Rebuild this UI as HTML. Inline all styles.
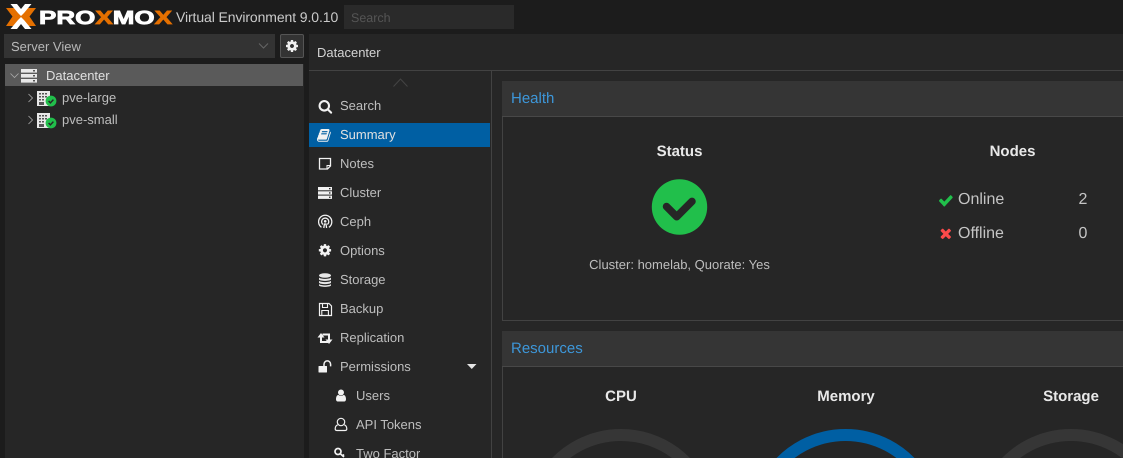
<!DOCTYPE html>
<html><head><meta charset="utf-8"><style>
html,body{margin:0;padding:0;width:1123px;height:458px;overflow:hidden;background:#1c1c1c;font-family:"Liberation Sans",sans-serif}
#w{position:relative;width:1123px;height:458px;overflow:hidden;text-rendering:geometricPrecision}
.a{position:absolute;white-space:nowrap}
.t{position:absolute;white-space:nowrap;font-size:13px;line-height:16px;color:#bebebe}
.b{font-weight:bold;font-size:15px;color:#e8e8e8;transform:translateX(-50%)}
svg{position:absolute;left:0;top:0;overflow:hidden}
</style></head><body><div id="w">
<div class="a" style="left:309px;top:34px;width:814px;height:424px;background:#262626"></div>
<div class="a" style="left:4px;top:34px;width:271px;height:24px;background:#333"></div>
<div class="a" style="left:280px;top:34px;width:22px;height:22px;background:#333;border:1px solid #555;border-radius:2px"></div>
<div class="a" style="left:5px;top:64px;width:299px;height:394px;background:#262626"></div>
<div class="a" style="left:5px;top:64px;width:298px;height:22px;background:#5a5a5a"></div>
<div class="a" style="left:344px;top:5px;width:170px;height:24px;background:#2a2a2a"></div>
<div class="a" style="left:309px;top:70px;width:814px;height:1px;background:#424242"></div>
<div class="a" style="left:491px;top:71px;width:1px;height:387px;background:#424242"></div>
<div class="a" style="left:309px;top:123px;width:181px;height:24px;background:#005fa3"></div>
<div class="a" style="left:502px;top:81px;width:621px;height:35px;background:#353535;border-bottom:1px solid #484848"></div>
<div class="a" style="left:502px;top:117px;width:620px;height:203px;border-left:1px solid #424242;border-bottom:1px solid #424242"></div>
<div class="a" style="left:502px;top:331px;width:621px;height:35px;background:#353535;border-bottom:1px solid #484848"></div>
<div class="a" style="left:502px;top:367px;width:620px;height:91px;border-left:1px solid #424242"></div>

<svg width="1123" height="458" viewBox="0 0 1123 458">
<defs>
<path id="cog" d="M1152 896q0-106-75-181t-181-75-181 75-75 181 75 181 181 75 181-75 75-181zm512-109v222q0 12-8 23t-20 13l-185 28q-19 54-39 91 35 50 107 138 10 12 10 25t-9 23q-27 37-99 108t-94 71q-12 0-26-9l-138-108q-44 23-91 38-16 136-29 186-7 28-36 28h-222q-14 0-24.500-8.500t-11.500-21.500l-28-184q-49-16-90-37l-141 107q-10 9-25 9-14 0-25-11-126-114-165-168-7-10-7-23 0-12 8-23 15-21 51-66.500t54-70.500q-27-50-41-99l-183-27q-13-2-21-12.500t-8-23.500v-222q0-12 8-23t19-13l186-28q14-46 39-92-40-57-107-138-10-12-10-24 0-10 9-23 26-36 98.500-107.500t94.500-71.500q13 0 26 10l138 107q44-23 91-38 16-136 29-186 7-28 36-28h222q14 0 24.500 8.500t11.500 21.500l28 184q49 16 90 37l142-107q9-9 24-9 13 0 25 10 129 119 165 170 7 8 7 22 0 12-8 23-15 21-51 66.500t-54 70.500q26 50 41 98l183 28q13 2 21 12.500t8 23.500z"/>
<path id="chk" d="M1671 566q0 40-28 68l-724 724-136 136q-28 28-68 28t-68-28l-136-136-362-362q-28-28-28-68t28-68l136-136q28-28 68-28t68 28l294 295 656-657q28-28 68-28t68 28l136 136q28 28 28 68z"/>
<g id="node"><rect x="0" y="0" width="13" height="15" fill="#e8e8e8"/><g fill="#555"><rect x="2" y="2" width="2" height="1.500"/><rect x="5" y="2" width="2" height="1.500"/><rect x="8" y="2" width="2" height="1.500"/><rect x="2" y="5" width="2" height="1.500"/><rect x="5" y="5" width="2" height="1.500"/><rect x="8" y="5" width="2" height="1.500"/><rect x="2" y="8" width="2" height="1.500"/><rect x="5" y="8" width="2" height="1.500"/><rect x="2" y="11" width="5" height="3"/></g><circle cx="14" cy="10" r="5.400" fill="#21bf4b"/><path d="M11.600 10l1.800 1.900 3-3.300" fill="none" stroke="#262626" stroke-width="1.400"/></g>
</defs>

<!-- logo -->
<polygon points="6,8 15.500,8 22,16.500 15.500,26 6,26 12.500,16.500" fill="#e57000"/>
<polygon points="36,8 26.500,8 20,16.500 26.500,26 36,26 29.500,16.500" fill="#e57000"/>
<polygon points="10.500,4 17,4 21,9 25,4 31.500,4 24,13 21,16 18,13" fill="#fff"/>
<polygon points="10.500,29 17,29 21,24 25,29 31.500,29 24,20 21,17 18,20" fill="#fff"/>
<text x="39" y="24" font-family="Liberation Sans" font-weight="bold" font-size="19" textLength="133" lengthAdjust="spacingAndGlyphs" stroke-width=".8" stroke="#fff" fill="#fff">PRO<tspan fill="#e57000" stroke="#e57000">X</tspan>MO<tspan fill="#e57000" stroke="#e57000">X</tspan></text>

<!-- combo + gear -->
<path d="M259 43.500l4.500 4.500 4.500-4.500" fill="none" stroke="#666" stroke-width="1"/>
<use href="#cog" transform="translate(285,39) scale(.0078)" fill="#f0f0f0"/>

<!-- tree -->
<path d="M10.500 73.500l4 4 4-4" fill="none" stroke="#aaa" stroke-width=".8"/>
<g fill="#e8e8e8"><rect x="21" y="69" width="16" height="3.600"/><rect x="21" y="74" width="16" height="3.600"/><rect x="21" y="79" width="16" height="3.600"/></g>
<g fill="#555"><rect x="33" y="70" width="2" height="1.500"/><rect x="33" y="75" width="2" height="1.500"/><rect x="33" y="80" width="2" height="1.500"/></g>
<path d="M28.500 94l4 4-4 4M28.500 116l4 4-4 4" fill="none" stroke="#aaa" stroke-width=".8"/>
<use href="#node" x="37" y="91"/>
<use href="#node" x="37" y="113"/>

<!-- scroll up -->
<path d="M393.500 86.500l7-7.500 7 7.500" fill="none" stroke="#444" stroke-width="1"/>

<!-- menu icons -->
<path transform="translate(318,99) scale(.0082)" fill="#f2f2f2" d="M1216 832q0-185-131.500-316.500t-316.500-131.500-316.500 131.500-131.500 316.500 131.500 316.500 316.500 131.500 316.500-131.500 131.500-316.500zm512 832q0 52-38 90t-90 38q-54 0-90-38l-343-342q-179 124-399 124-143 0-273.500-55.500t-225-150-150-225-55.500-273.500 55.500-273.500 150-225 225-150 273.500-55.500 273.500 55.500 225 150 150 225 55.500 273.500q0 220-124 399l343 343q37 37 37 90z"/>
<path transform="translate(317,128) scale(.0083)" fill="#f2f2f2" d="M1639 478q40 57 18 129l-275 906q-19 64-76.500 107.500t-122.500 43.500h-923q-77 0-148.500-53.500t-99.500-131.500q-24-67-2-127 0-4 3-27t4-37q1-8-3-21.500t-3-19.500q2-11 8-21t16.500-23.500 16.500-23.500q23-38 45-91.500t30-91.500q3-10 .5-30t-.5-28q3-11 17-28t17-23q21-36 42-92t25-90q1-9-2.500-32t.5-28q4-13 22-30.500t22-22.500q19-26 42.500-84.500t27.500-96.500q1-8-3-25.500t-2-26.500q2-8 9-18t18-23 17-21q8-12 16.500-30.500t15-35 16-36 19.500-32 26.500-23.500 36-11.500 47.500 5.500l-1 3q38-9 51-9h761q74 0 114 56t18 130l-274 906q-36 119-71.500 153.500t-128.500 34.500h-869q-27 0-38 15-11 16-1 43 24 70 144 70h923q29 0 56-15.500t35-41.500l300-987q7-22 5-57 38 15 59 43zm-1064 2q-4 13 2 22.500t20 9.500h608q13 0 25.500-9.500t16.500-22.500l21-64q4-13-2-22.500t-20-9.500h-608q-13 0-25.500 9.500t-16.500 22.500zm-83 256q-4 13 2 22.500t20 9.500h608q13 0 25.500-9.500t16.500-22.500l21-64q4-13-2-22.500t-20-9.500h-608q-13 0-25.500 9.500t-16.500 22.500z"/>
<path d="M319.500 158.500h11v7.500l-3 3h-8z" fill="none" stroke="#f2f2f2" stroke-width="1.300"/>
<path d="M330.500 165.500h-3.500v3.500" fill="none" stroke="#f2f2f2" stroke-width="1"/>
<g fill="#f2f2f2"><rect x="318" y="187" width="14" height="3.300"/><rect x="318" y="191.300" width="14" height="3.300"/><rect x="318" y="195.600" width="14" height="3.300"/></g>
<g fill="#262626"><rect x="329" y="188" width="1.500" height="1.300"/><rect x="329" y="192.300" width="1.500" height="1.300"/><rect x="329" y="196.600" width="1.500" height="1.300"/></g>
<g fill="none" stroke="#f2f2f2" stroke-width="1.300"><path d="M321.500 227.300a6.600 6.600 0 1 1 7.400 0"/><path d="M323 224.500a3.600 3.600 0 1 1 4.400 0"/><path d="M323.800 228l.6-4h1.600l.6 4"/></g>
<circle cx="325.200" cy="221.300" r="1.300" fill="#f2f2f2"/>
<use href="#cog" transform="translate(317.800,243.100) scale(.008)" fill="#f2f2f2"/>
<g fill="#e8e8e8"><ellipse cx="325" cy="275.500" rx="6" ry="2.300"/><path d="M319 277.500c1.500 1.800 10.500 1.800 12 0v2c-1.500 1.800-10.500 1.800-12 0z"/><path d="M319 280.800c1.500 1.800 10.500 1.800 12 0v2c-1.500 1.800-10.500 1.800-12 0z"/><path d="M319 284c1.500 1.800 10.500 1.800 12 0v1.500c-1.500 1.800-10.500 1.800-12 0z"/></g>
<path d="M319.500 303.500h9.500l2.500 2.500v9.500h-12z" fill="none" stroke="#f2f2f2" stroke-width="1.200"/>
<path d="M322.500 304v3.500h5v-3.500M321.800 315v-4.500h6.600v4.500" fill="none" stroke="#f2f2f2" stroke-width="1.100"/>
<path d="M321 336v6h7M322.500 334.500h6.500v6" fill="none" stroke="#f2f2f2" stroke-width="2"/>
<polygon points="317.500,337.500 321,333 324.500,337.500" fill="#f2f2f2"/>
<polygon points="325.500,339.500 332.500,339.500 329,344" fill="#f2f2f2"/>
<rect x="318.500" y="366" width="8.500" height="6.500" fill="#f2f2f2" rx=".5"/>
<path d="M324 366.500v-2.300a3.300 3.300 0 0 1 6.600 0v2.200" fill="none" stroke="#f2f2f2" stroke-width="1.500"/>
<path transform="translate(334,388.500) scale(.0078)" fill="#f2f2f2" d="M1536 1399q0 109-62.500 187t-150.500 78h-854q-88 0-150.500-78t-62.500-187q0-85 8.500-160.500t31.500-152 58.500-131 94-89 134.500-34.500q131 128 313 128t313-128q76 0 134.500 34.500t94 89 58.500 131 31.500 152 8.500 160.500zm-256-887q0 159-112.500 271.500t-271.500 112.500-271.500-112.500-112.500-271.500 112.500-271.500 271.500-112.500 271.500 112.500 112.500 271.500z"/>
<circle cx="341" cy="422" r="3.700" fill="none" stroke="#f2f2f2" stroke-width="1.200"/>
<path d="M337.700 424.800c-2 .8-2.500 2.300-2.500 4 0 1 .7 1.700 1.600 1.700h8.400c1 0 1.600-.7 1.600-1.700 0-1.700-.5-3.200-2.500-4" fill="none" stroke="#f2f2f2" stroke-width="1.200"/>
<circle cx="338" cy="451.500" r="3" fill="none" stroke="#f2f2f2" stroke-width="1.700"/>
<path d="M340 453.500l4 3.500M343 455.500l1-1" fill="none" stroke="#f2f2f2" stroke-width="1.700"/>
<path d="M467 364h9.500l-4.750 5z" fill="#e4e4e4"/>

<!-- status -->
<circle cx="679.500" cy="207" r="27.700" fill="#21bf4b"/>
<path d="M666.500 206.500l10.200 10.200 15.300-15.300" fill="none" stroke="#262626" stroke-width="7.500" stroke-linejoin="round" stroke-linecap="round"/>
<use href="#chk" transform="translate(938,192) scale(.0088 .0095)" fill="#21bf4b"/>
<path transform="translate(938,225.500) scale(.0087)" fill="#fb4a4a" d="M1490 1322q0 40-28 68l-136 136q-28 28-68 28t-68-28l-294-294-294 294q-28 28-68 28t-68-28l-136-136q-28-28-28-68t28-68l294-294-294-294q-28-28-28-68t28-68l136-136q28-28 68-28t68 28l294 294 294-294q28-28 68-28t68 28l136 136q28 28 28 68t-28 68l-294 294 294 294q28 28 28 68z"/>

<!-- gauges: upper arcs, run past the frame edge and clipped by the svg -->
<g fill="none" stroke-width="12">
<path d="M549.500 470A90.500 90.500 0 0 1 692.500 470" stroke="#363636"/>
<path d="M774 470A90.500 90.500 0 0 1 917 470" stroke="#005fa3"/>
<path d="M999.500 470A90.500 90.500 0 0 1 1142.500 470" stroke="#363636"/>
</g>
</svg>

<div class="t" style="left:176px;top:9px;font-size:14px;color:#cacaca;letter-spacing:-.1px">Virtual Environment 9.0.10</div>
<div class="t" style="left:351px;top:10px;font-size:12.500px;color:#555">Search</div>
<div class="t" style="left:11px;top:39px;color:#b8b8b8">Server View</div>
<div class="t" style="left:46px;top:68px;color:#e0e0e0">Datacenter</div>
<div class="t" style="left:62px;top:90px">pve-large</div>
<div class="t" style="left:62px;top:112px">pve-small</div>
<div class="t" style="left:317px;top:45px;color:#d4d4d4">Datacenter</div>
<div class="t" style="left:340px;top:98px">Search</div>
<div class="t" style="left:340px;top:127px;color:#e0e0e0">Summary</div>
<div class="t" style="left:340px;top:156px">Notes</div>
<div class="t" style="left:340px;top:185px">Cluster</div>
<div class="t" style="left:340px;top:214px">Ceph</div>
<div class="t" style="left:340px;top:243px">Options</div>
<div class="t" style="left:340px;top:272px">Storage</div>
<div class="t" style="left:340px;top:301px">Backup</div>
<div class="t" style="left:340px;top:330px">Replication</div>
<div class="t" style="left:340px;top:359px">Permissions</div>
<div class="t" style="left:356px;top:388px">Users</div>
<div class="t" style="left:356px;top:417px">API Tokens</div>
<div class="t" style="left:356px;top:446px;height:12px;overflow:hidden">Two Factor</div>
<div class="t" style="left:511px;top:91px;font-size:15px;color:#3d96d8">Health</div>
<div class="t" style="left:511px;top:341px;font-size:15px;color:#3d96d8">Resources</div>
<div class="t b" style="left:679.500px;top:144px">Status</div>
<div class="t b" style="left:1012.500px;top:144px">Nodes</div>
<div class="t" style="left:679.500px;top:257px;transform:translateX(-50%);font-size:13px">Cluster: homelab, Quorate: Yes</div>
<div class="t" style="left:958px;top:192px;font-size:16px;color:#c4c4c4">Online</div>
<div class="t" style="left:958px;top:226px;font-size:16px;color:#c4c4c4">Offline</div>
<div class="t" style="left:1078.500px;top:192px;font-size:16px;color:#c4c4c4">2</div>
<div class="t" style="left:1078.500px;top:226px;font-size:16px;color:#c4c4c4">0</div>
<div class="t b" style="left:621px;top:389px">CPU</div>
<div class="t b" style="left:846px;top:389px">Memory</div>
<div class="t b" style="left:1071px;top:389px">Storage</div>
</div></body></html>
